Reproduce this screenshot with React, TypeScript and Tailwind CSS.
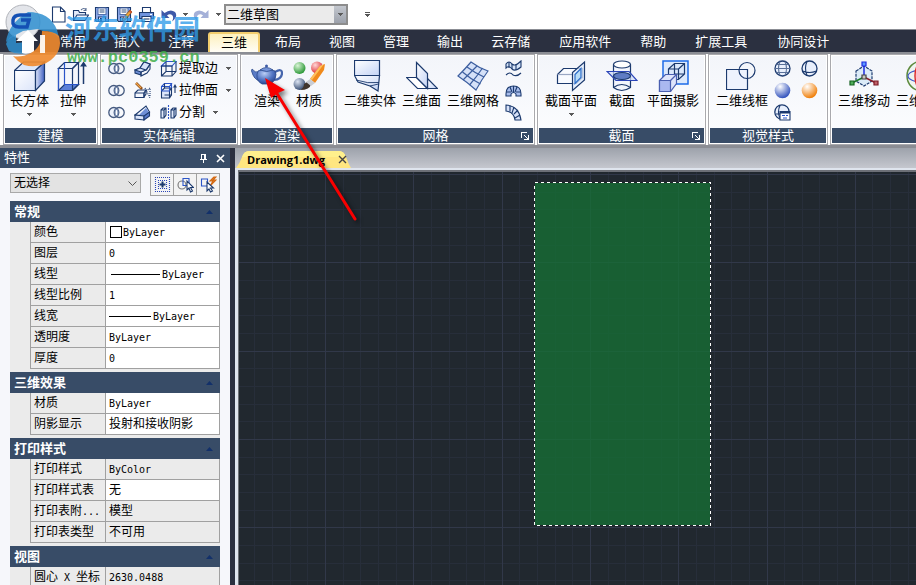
import React from 'react';

const NAVY = '#1c3a6e';

const tabs = ['常用', '插入', '注释', '三维', '布局', '视图', '管理', '输出', '云存储', '应用软件', '帮助', '扩展工具', '协同设计'];

type Row = { label: string; value: string; kind?: 'swatch' | 'line' | 'thick'; readOnly?: boolean };

const sections: { title: string; rows: Row[] }[] = [
  {
    title: '常规',
    rows: [
      { label: '颜色', value: 'ByLayer', kind: 'swatch' },
      { label: '图层', value: '0' },
      { label: '线型', value: 'ByLayer', kind: 'line' },
      { label: '线型比例', value: '1' },
      { label: '线宽', value: 'ByLayer', kind: 'thick' },
      { label: '透明度', value: 'ByLayer' },
      { label: '厚度', value: '0' },
    ],
  },
  {
    title: '三维效果',
    rows: [
      { label: '材质', value: 'ByLayer' },
      { label: '阴影显示', value: '投射和接收阴影' },
    ],
  },
  {
    title: '打印样式',
    rows: [
      { label: '打印样式', value: 'ByColor', readOnly: true },
      { label: '打印样式表', value: '无' },
      { label: '打印表附...', value: '模型', readOnly: true },
      { label: '打印表类型', value: '不可用', readOnly: true },
    ],
  },
  {
    title: '视图',
    rows: [{ label: '圆心 X 坐标', value: '2630.0488', readOnly: true }],
  },
];

const Caret = () => (
  <svg className="block h-[3px] w-[5px] shrink-0" viewBox="0 0 5 3" shapeRendering="crispEdges">
    <path d="M0 0h5v1H4v1H3v1H2V2H1V1H0z" fill="#5a5a5a" />
  </svg>
);

const Icon = ({ size = 'small', children }: { size?: 'small' | 'big'; children: React.ReactNode }) =>
  size === 'big' ? (
    <svg className="block h-8 w-8 shrink-0" viewBox="0 0 32 32" fill="none" stroke={NAVY} strokeWidth="1.2">
      {children}
    </svg>
  ) : (
    <svg className="block h-[17px] w-[17px] shrink-0" viewBox="0 0 17 17" fill="none" stroke={NAVY} strokeWidth="1.1">
      {children}
    </svg>
  );

/* ---- quick access icons ---- */

const NewIcon = () => (
  <Icon>
    <path d="M2.500 1h8L15 5.500V16H2.500z" fill="#fff" />
    <path d="M10.500 1v4.500H15" />
  </Icon>
);

const OpenIcon = () => (
  <Icon>
    <path d="M1.500 14V4.500h5l1 2h6V9" fill="#e3ebf9" />
    <path d="M1.500 14.500L5 9h11.500l-3.500 5.500z" fill="#eef3fc" />
    <path d="M9 4q3-3 5 0m0-2v2.500h-2.500" stroke="#5b6f94" />
  </Icon>
);

const SaveIcon = ({ pencil = false }: { pencil?: boolean }) => (
  <Icon>
    <path d="M1.500 1.500h13v14h-12l-1-1z" fill="#8fabea" />
    <path d="M4 2h8v6.500H4z" fill="#fff" stroke="#5271ad" />
    <path d="M5.500 4h5M5.500 6h5" stroke="#31507f" />
    <path d="M4.500 11h7v4.500h-7z" fill="#eef2fb" />
    <path d="M6 12h2v3H6z" fill={NAVY} stroke="none" />
    {pencil && (
      <>
        <path d="M14 4l2 2-7 8-3 1 1-3z" fill="#f0a63c" stroke="#7a4b1c" strokeWidth="0.8" />
        <path d="M14 4l2 2-1.200 1.400-2-2z" fill="#d8552d" stroke="none" />
      </>
    )}
  </Icon>
);

const PrintIcon = () => (
  <Icon>
    <path d="M4.500 1.500h8V7h-8z" fill="#fff" />
    <path d="M1.500 6.500h14v6h-14z" fill="#6f93dd" />
    <path d="M4 10.500h9v5H4z" fill="#fff" />
    <path d="M5.500 13h6" />
    <path d="M12 8.500h2" stroke="#fff" />
  </Icon>
);

const UndoIcon = () => (
  <Icon>
    <path d="M1.500 4v8h8L7 9.500Q10 7 12.500 9.500 14 12 12 15.500 18.500 10.500 15 6 10.500 2.500 4.500 7z" fill="#3e59a8" stroke="none" />
  </Icon>
);

const RedoIcon = () => (
  <Icon>
    <path d="M15.500 4v8h-8L10 9.500Q7 7 4.500 9.500 3 12 5 15.500-1.500 10.500 2 6 6.500 2.500 12.500 7z" fill="#a4b0d8" stroke="none" />
  </Icon>
);

/* ---- ribbon icons ---- */

const BoxIcon = () => (
  <Icon size="big">
    <defs>
      <linearGradient id="boxSide" x1="0" x2="1">
        <stop offset="0" stopColor="#dfe7fb" />
        <stop offset="1" stopColor="#3f5fc0" />
      </linearGradient>
      <linearGradient id="boxFront" x1="0" y1="0" x2="1" y2="1">
        <stop offset="0" stopColor="#fff" />
        <stop offset="1" stopColor="#dbe4fa" />
      </linearGradient>
    </defs>
    <path d="M.500 10.500h21v20H.500z" fill="url(#boxFront)" />
    <path d="M.500 10.500l9-8.500h21l-9 8.500z" fill="#dce7fb" />
    <path d="M21.500 10.500l9-8.500v19l-9 9.500z" fill="url(#boxSide)" />
  </Icon>
);

const ExtrudeIcon = () => (
  <Icon size="big">
    <path d="M1.500 8.500l6-6h14l-6 6z" fill="#edf2fd" />
    <path d="M1.500 30.500l6-6h14l-6 6z" fill="#5c80d8" />
    <path d="M1.500 8.500h14v22h-14zM15.500 8.500l6-6v22l-6 6" />
    <path d="M7.500 2.500v22h14M1.500 8.500v22" stroke="#2b55c8" />
    <path d="M26.500 24V5" strokeWidth="1.500" />
    <path d="M26.500 1.500l3.500 5h-7z" fill={NAVY} stroke="none" />
  </Icon>
);

const UnionIcon = () => (
  <Icon>
    <circle cx="5.800" cy="8.500" r="5" fill="#edf2fc" stroke="#44597f" strokeWidth="1.300" />
    <circle cx="11.200" cy="8.500" r="5" stroke="#44597f" strokeWidth="1.300" />
    <ellipse cx="8.500" cy="8.500" rx="1.500" ry="3.300" fill="#fff" stroke="#7287ae" />
  </Icon>
);

const ThickenIcon = () => (
  <Icon>
    <path d="M1 10l5-2 4-6 6 2-3 5-6 3v3l-6-2z" fill="#6f8fd6" />
    <path d="M6 8l4-6 6 2-4 6zM1 10l5-2 6 2-5 2z" fill="#d8e3f9" />
    <path d="M7 12v4l6-3 3-4V4" />
  </Icon>
);

const SliceIcon = () => (
  <Icon>
    <path d="M1 11l3-3h8l-2 3v4.500H1z" fill="#f4f7fe" />
    <path d="M1 11h9v4.500M12 8v4l-2 3" />
    <path d="M11 6l5 10M16 6l-6 5m6-4v8" strokeDasharray="1 1" />
    <path d="M2 1l6 6" stroke="#8a4a16" strokeWidth="2.600" />
    <path d="M2 1l5 5" stroke="#f3a649" strokeWidth="1.200" />
  </Icon>
);

const WedgeIcon = () => (
  <Icon>
    <path d="M1 11L12 2l3.500 6-5.500 4z" fill="#f1f5fd" />
    <path d="M5 11l7-7 3 4.500-5 3.500z" fill="#6f8fd6" stroke="none" />
    <path d="M1 11l9 1v4l-9-1z" fill="#dbe5fa" />
    <path d="M10 12l5.500-4v4L10 16z" fill="#5778ca" />
  </Icon>
);

const ExtractIcon = () => (
  <Icon>
    <path d="M1.500 6L6 1.500h10L12 6z" fill="#edf2fd" stroke="#2b55c8" />
    <path d="M1.500 6H12v10H1.500zM12 16l4-4.500v-10M6 1.500v10M1.500 16L6 11.500h10" />
  </Icon>
);

const PullFaceIcon = () => (
  <Icon>
    <path d="M1.500 9l3-3h7l-2 3v7h-8z" fill="#dce5f9" />
    <path d="M1.500 9V4.500l3-3h7l-2 3h-8M9.500 4.500V9h-8M11.500 1.500V6" stroke="#2b55c8" />
    <path d="M9.500 16l2-3V6M4.500 6V1.500M4.500 13h7" />
    <path d="M15 11V5" />
    <path d="M15 2l2 3.500h-4z" fill={NAVY} stroke="none" />
  </Icon>
);

const SeparateIcon = () => (
  <Icon>
    <path d="M1 6l2-2h3v7l-2 3H1zM1 6h3v8M4 6l2-2M11 6l2-2h3v7l-2 3h-3zM11 6h3v8M14 6l2-2" fill="#e3ebfb" />
    <path d="M8.500 1v15" stroke="#2b55c8" strokeDasharray="2 1" />
  </Icon>
);

const TeapotIcon = () => (
  <Icon size="big">
    <defs>
      <radialGradient id="pot" cx="0.400" cy="0.300" r="0.700">
        <stop offset="0" stopColor="#b9cdf5" />
        <stop offset="0.600" stopColor="#5577c4" />
        <stop offset="1" stopColor="#2c4a96" />
      </radialGradient>
    </defs>
    <path d="M24 12q7-4 7 1 0 6-8 7" stroke="#4766ad" strokeWidth="2.200" />
    <path d="M8 12Q4 13 1 9l-.500 2Q3 20 9 21" fill="#5a7bc6" stroke="#2c4a8c" strokeWidth="0.800" />
    <path d="M7 11q8-4 17 0 2 3 0 8-2 4-5 5h-8q-4-2-5-6-.500-4 1-7z" fill="url(#pot)" stroke="#2c4a8c" strokeWidth="0.800" />
    <path d="M9 10q6-5 13 0-6 3-13 0z" fill="#7594d8" stroke="#2c4a8c" strokeWidth="0.800" />
    <circle cx="15.500" cy="6" r="1.500" fill="#3f5ca6" stroke="none" />
  </Icon>
);

const MaterialIcon = () => (
  <Icon size="big">
    <defs>
      <radialGradient id="gGreen" cx="0.350" cy="0.300" r="0.700"><stop offset="0" stopColor="#d9f4d6" /><stop offset="1" stopColor="#2f9a3a" /></radialGradient>
      <radialGradient id="gRed" cx="0.350" cy="0.300" r="0.700"><stop offset="0" stopColor="#ffd6d6" /><stop offset="1" stopColor="#dc2f38" /></radialGradient>
      <radialGradient id="gSteel" cx="0.350" cy="0.300" r="0.700"><stop offset="0" stopColor="#dce4f2" /><stop offset="1" stopColor="#3c5277" /></radialGradient>
    </defs>
    <g stroke="none">
      <circle cx="6.500" cy="8" r="6" fill="url(#gGreen)" />
      <circle cx="24" cy="7.500" r="6" fill="url(#gRed)" />
      <circle cx="6.500" cy="24" r="6" fill="url(#gSteel)" />
      <path d="M32 4l-1 6-9 13-5-4L27 6z" fill="#f08a1c" />
      <path d="M31 4L19 20l-2-1L27 6z" fill="#fdbf5e" />
      <path d="M18 24q-1 6-11 6 4-2 4-6l3-2z" fill="#40352d" />
      <path d="M17 19l5 4-4 3-5-4z" fill="#c9cdd4" />
    </g>
  </Icon>
);

const Solid2dIcon = () => (
  <Icon size="big">
    <defs>
      <linearGradient id="solid" x1="0" y1="0" x2="1" y2="1">
        <stop offset="0" stopColor="#fff" />
        <stop offset="1" stopColor="#c3d3f6" />
      </linearGradient>
    </defs>
    <path d="M.500.500h25v15H.500z" fill="url(#solid)" />
    <path d="M.500 15.500h25L24 31l-8-5-12-4z" fill="url(#solid)" />
    <path d="M2 20q12 4 23 2.500M16 26l8.500-2" strokeWidth="0.900" />
  </Icon>
);

const Face3dIcon = () => (
  <Icon size="big">
    <path d="M.500 17.500h10l11 11H11.500z" fill="#fff" />
    <path d="M21.500 18.500l10 10h-10z" fill="url(#solid)" />
    <path d="M10.500 2.500l11 11v15l-11-11z" fill="url(#solid)" />
  </Icon>
);

const MeshIcon = () => (
  <Icon size="big">
    <path d="M1 16Q8 9 14 2q8 6 17 9-6 8-12 19Q10 22 1 16z" fill="#d5e1f8" stroke="#3c5e9f" />
    <path d="M5.500 12q8 7 18 12M10 7q8 6 17 10M6 20q7-7 14-14M12.500 25q7-8 13-17" stroke="#3c5e9f" />
  </Icon>
);

const RuledIcon = () => (
  <Icon>
    <path d="M1 4q3-4 6 0 3 3 9-3v6q-6 5-9 2-3-4-6-1z" fill="#d6e4f8" />
    <path d="M4 2v6M7 4v5M11 4v6M1 15q4-4 7 0 4 2 8-2" />
  </Icon>
);

const RevolveIcon = () => (
  <Icon>
    <path d="M1 12Q1 4 8.500 4T16 12v2h-5v-2q-2.500-3-5 0v2H1z" fill="#a8bdec" />
    <path d="M1 10h5M11 10h5M5 5l2 5M12 5l-2 5M8.500 4v6" />
  </Icon>
);

const EdgeMeshIcon = () => (
  <Icon>
    <path d="M1 1Q14 2 16 16h-6Q9 8 1 7z" fill="#d6e1f8" />
    <path d="M5 1.500v6M9 3L7 9M13 6l-4 4M15 11l-5 3" />
  </Icon>
);

const SectionPlaneIcon = () => (
  <Icon size="big">
    <path d="M2.500 14.500l6-6h19v9l-6 6h-19z" fill="#f8faff" />
    <path d="M2.500 14.500h16" stroke="#9aa7c4" />
    <path d="M17.500 12.500l12-10.500v18l-12 10.500z" fill="#e4edfd" fillOpacity="0.800" />
    <path d="M20 14.500l6-6v9l-6 6z" fill="#b8dcf7" stroke="#2b6cc8" />
  </Icon>
);

const SectionIcon = () => (
  <Icon size="big">
    <path d="M7.500 4.500v23q8 6 17 0v-23" fill="#f3f6fd" />
    <ellipse cx="16" cy="4.500" rx="8.500" ry="3.500" fill="#fff" />
    <path d="M1 11.500h22l8 9H10z" fill="#cfdcf8" fillOpacity="0.700" stroke="#2b45b8" />
    <ellipse cx="16" cy="16" rx="8.500" ry="3.500" fill="#5f7cc4" />
    <path d="M7.500 27.500q8-6 17 0" />
  </Icon>
);

const FlatshotIcon = () => (
  <Icon size="big">
    <path d="M6 1h25v23H6z" fill="#dce9fc" stroke="#1d6be8" strokeWidth="1.500" />
    <path d="M11.500 9l6-5.500h10V14l-6 5.500h-10zM11.500 9h10v10.500M21.500 9l6-5.500M17.500 3.500V14h10M11.500 19.500l6-5.500" />
    <path d="M2.500 20.500l6-6h11v9l-6 8h-11z" fill="#dfe5fb" stroke="#4a5fb0" />
    <path d="M2.500 20.500h11v11h-11z" fill="#aab8f0" stroke="#4a5fb0" />
    <path d="M13.500 20.500l6-6" stroke="#4a5fb0" />
  </Icon>
);

const WireframeIcon = () => (
  <Icon size="big">
    <path d="M.500 9.500h21v20H.500z" fill="#eef2fd" />
    <circle cx="21" cy="10.500" r="8" />
  </Icon>
);

const GlobeIcon = ({ hidden = false }: { hidden?: boolean }) => (
  <Icon>
    <circle cx="8.500" cy="8.500" r="7.500" fill="#e8effc" strokeWidth="1.300" />
    {hidden ? (
      <path d="M6 1.500Q3 8 6 15.500M1.500 11q7 3 14 0" />
    ) : (
      <path d="M6 1.500Q3 8 6 15.500M11 1.500q3 7 0 14M1 8.500h15M2.500 4.500h12M2.500 12.500h12" stroke="#5a7199" />
    )}
  </Icon>
);

const Ball = ({ tone }: { tone: 'blue' | 'orange' }) => (
  <Icon>
    <defs>
      <radialGradient id={`ball-${tone}`} cx="0.350" cy="0.250" r="0.750">
        <stop offset="0" stopColor="#fff" />
        <stop offset="1" stopColor={tone === 'blue' ? '#3353bd' : '#f07f09'} />
      </radialGradient>
    </defs>
    <circle cx="8.500" cy="8.500" r="7.800" fill={`url(#ball-${tone})`} stroke="none" />
  </Icon>
);

const StyleManagerIcon = () => (
  <Icon>
    <circle cx="8" cy="8" r="7.200" fill="#e8effc" strokeWidth="1.300" />
    <path d="M6 1.500q-3 6 0 13M2 10h5" />
    <path d="M6 7.500h10v8.500H6z" fill="#fff" />
    <path d="M6 8.500h10" strokeWidth="2" />
    <path d="M8 11.500h3m1 0h2m-5 2.500h4" stroke="#2b55c8" />
  </Icon>
);

const Move3dIcon = () => (
  <Icon size="big">
    <path d="M8 11l8-5 8 5v10l-8 5-8-5z" fill="#dcebf8" strokeDasharray="3 1" />
    <path d="M16 16V5" stroke="#1d2be0" strokeWidth="1.500" />
    <path d="M16 17L4 23" stroke="#1d7a2a" strokeWidth="1.500" />
    <path d="M16 17l12 6" stroke="#8a1f2a" strokeWidth="1.500" />
    <path d="M14 2h4v4h-4z" fill="#5f9bff" stroke="#1d2be0" />
    <path d="M2 21h4v4H2z" fill="#4fae57" stroke="#176322" />
    <path d="M26 21h4v4h-4z" fill="#c06068" stroke="#7c1c26" />
    <path d="M14 15h4v4h-4z" fill="#c9c9c0" stroke="#444" />
  </Icon>
);

const Rotate3dIcon = () => (
  <Icon size="big">
    <circle cx="16" cy="16" r="15" fill="#eef5f0" stroke="#5c8a3c" strokeWidth="1.500" />
    <ellipse cx="16" cy="16" rx="14" ry="6" stroke="#3f57c8" />
    <ellipse cx="16" cy="16" rx="7" ry="14" stroke="#e02a2a" strokeWidth="1.500" />
  </Icon>
);

const BigButton = ({ icon, label, menu = false }: { icon: React.ReactNode; label: string; menu?: boolean }) => (
  <button className="flex min-w-8 shrink-0 flex-col items-center whitespace-nowrap pt-1">
    {icon}
    <span className="leading-[18px]">{label}</span>
    {menu && (
      <span className="pt-[3px]">
        <Caret />
      </span>
    )}
  </button>
);

const SmallButton = ({ icon, label, title }: { icon: React.ReactNode; label?: string; title: string }) => (
  <button aria-label={title} className="flex h-[22px] items-center gap-[2px] whitespace-nowrap">
    {icon}
    {label && (
      <>
        <span>{label}</span>
        <span className="pl-[6px]">
          <Caret />
        </span>
      </>
    )}
  </button>
);

const Panel = ({ title, launcher, className, children }: { title: string; launcher?: boolean; className: string; children: React.ReactNode }) => (
  <section className={`flex h-[91px] shrink-0 flex-col overflow-hidden border border-[#a9a9ad] bg-white p-px ${className}`}>
    <div className="flex min-h-0 flex-1 items-start bg-gradient-to-b from-[#f3f5fa] to-[#fbfcfe]">{children}</div>
    <h2 className="flex h-[15px] items-center bg-[#384c67] text-white">
      <span className="flex-1 text-center">{title}</span>
      {launcher && (
        <button aria-label={`${title}设置`} className="-ml-3 mr-1">
          <svg className="block h-2 w-2" viewBox="0 0 8 8" fill="none" stroke="#fff" shapeRendering="crispEdges">
            <path d="M.500 6V.500H6M3 3l4 4M7.500 3v4.500H3" />
          </svg>
        </button>
      )}
    </h2>
  </section>
);

/* Latin runs are set in half-width characters next to the 12px Chinese text */
const Mixed = ({ text }: { text: string }) => (
  <>
    {text.split(/([ -~]+)/).map((part, i) =>
      i % 2 ? (
        <span key={i} className="whitespace-pre font-['DejaVu_Sans_Mono',monospace] text-[10px]">
          {part}
        </span>
      ) : (
        part
      ),
    )}
  </>
);

const Value = ({ row }: { row: Row }) => (
  <span className="flex items-center whitespace-nowrap">
    {row.kind === 'swatch' && <span className="ml-px mr-px h-3 w-3 border border-black bg-white" />}
    {row.kind === 'line' && <span className="ml-[2px] mr-[2px] h-px w-[49px] bg-black" />}
    {row.kind === 'thick' && <span className="mr-[2px] h-px w-[42px] bg-black" />}
    <span>
      <Mixed text={row.value} />
    </span>
  </span>
);

const Section = ({ title, rows }: { title: string; rows: Row[] }) => (
  <table className="mb-[3px] w-full table-fixed border-separate border-spacing-0">
    <colgroup>
      <col className="w-5" />
      <col className="w-[75px]" />
      <col />
    </colgroup>
    <thead>
      <tr className="h-[21px] bg-[#384c67] text-white">
        <th colSpan={3} className="p-0 text-left text-[13px] leading-5">
          <button className="flex w-full items-center justify-between pl-1 pr-[7px]">
            {title}
            <svg className="h-1 w-[7px]" viewBox="0 0 7 4">
              <path d="M3.500 0L7 4H0z" fill="#12306a" />
            </svg>
          </button>
        </th>
      </tr>
    </thead>
    <tbody>
      {rows.map((row) => (
        <tr key={row.label} className="h-[21px]">
          <td className="p-0" />
          <th scope="row" className="whitespace-nowrap border-b border-l border-[#a0a0a0] p-0 pl-[3px] text-left font-normal leading-4">
            <Mixed text={row.label} />
          </th>
          <td className={`border-b border-l border-r border-[#a0a0a0] p-0 pl-[3px] leading-4 ${row.readOnly ? 'bg-[#ebebeb]' : 'bg-white'}`}>
            <Value row={row} />
          </td>
        </tr>
      ))}
    </tbody>
  </table>
);

const Properties = () => (
  <aside className="flex w-[235px] shrink-0 flex-col border-r-[5px] border-[#2b3040] bg-[#f6f7fb] text-[12px]">
    <header className="flex h-5 shrink-0 items-center bg-[#384c67] pl-1 pr-[5px] text-[13px] text-white">
      <h2 className="flex-1">特性</h2>
      <button aria-label="固定" className="mr-2">
        <svg className="block h-[9px] w-[9px]" viewBox="0 0 9 9" fill="none" stroke="#fff" shapeRendering="crispEdges">
          <path d="M2.500 5V.500h4V5M5.500 1v4M1 5.500h7M4.500 6v3" />
        </svg>
      </button>
      <button aria-label="关闭">
        <svg className="block h-[9px] w-[9px]" viewBox="0 0 9 9" stroke="#fff" strokeWidth="1.600">
          <path d="M1 1l7 7M8 1L1 8" />
        </svg>
      </button>
    </header>
    <div className="flex items-start justify-between pb-[5px] pl-[10px] pr-[10px] pt-[5px]">
      <div className="relative">
        <select aria-label="选择对象" className="h-5 w-[131px] appearance-none border border-[#a9a9a9] bg-[#e3e3e3] pl-[3px] text-[12px] leading-4">
          <option>无选择</option>
        </select>
        <svg className="pointer-events-none absolute right-1 top-2 h-[6px] w-[9px]" viewBox="0 0 9 6" fill="none" stroke="#555">
          <path d="M.500 .500l4 4 4-4" />
        </svg>
      </div>
      <div className="flex border-l border-[#a0a0a0]">
        {[
          <g key="pick">
            <path d="M1 1.500h15M1 15.500h15M1.500 1v15M15.500 1v15M4 4.500h9M4 12.500h9M4.500 4v9M12.500 4v9" stroke="#2b45b8" strokeDasharray="1 1" />
            <path d="M8.500 5.500v6M5.500 8.500h6" strokeWidth="2" />
          </g>,
          <g key="select">
            <circle cx="5" cy="9" r="4" stroke="#777" />
            <path d="M6 2.500h6v7H6z" stroke="#2b55c8" />
            <path d="M10 5v9l2-2 1.500 4 2-1-2-3.500h3z" fill="#fff" />
          </g>,
          <g key="quick">
            <path d="M1.500 3h6v7h-6z" stroke="#2b55c8" />
            <path d="M14 1l-4 4h3l-3 5 6-6h-3l3-3z" fill="#f5a13c" stroke="#d26814" />
            <path d="M7 6v9l2-2 1.500 3 2-1-2-3h3z" fill="#fff" />
          </g>,
        ].map((g) => (
          <button key={g.key} aria-label={String(g.key)} className="flex h-[23px] w-[23px] items-center justify-center border-y border-r border-[#a0a0a0] bg-[#f3f3f3]">
            <Icon>{g}</Icon>
          </button>
        ))}
      </div>
    </div>
    <div className="mx-[10px] min-h-0 flex-1 overflow-hidden bg-[#ebebeb]">
      {sections.map((s) => (
        <Section key={s.title} {...s} />
      ))}
    </div>
  </aside>
);

const STEP = 17.66;
const gridLines = Array.from({ length: 160 }, (_, i) => i - 4);

const Canvas = () => (
  <svg className="block h-full w-full" shapeRendering="crispEdges">
    {gridLines.filter((i) => i % 5 !== 0).map((i) => (
      <React.Fragment key={i}>
        <rect x={Math.round(86 + i * STEP)} y="0" width="1" height="100%" fill="#272e3a" />
        <rect x="0" y={Math.round(2 + i * STEP)} width="100%" height="1" fill="#272e3a" />
      </React.Fragment>
    ))}
    {gridLines.filter((i) => i % 5 === 0).map((i) => (
      <React.Fragment key={i}>
        <rect x={Math.round(86 + i * STEP)} y="0" width="1" height="100%" fill="#313849" />
        <rect x="0" y={Math.round(2 + i * STEP)} width="100%" height="1" fill="#313849" />
      </React.Fragment>
    ))}
    <rect x="295" y="10" width="177" height="344" fill="#157136" fillOpacity="0.750" />
    <rect x="295.500" y="10.500" width="176" height="343" fill="none" stroke="#20252d" />
    <rect x="295.500" y="10.500" width="176" height="343" fill="none" stroke="#fff" strokeDasharray="3 3" />
  </svg>
);

const Drawing = () => (
  <main className="flex min-w-0 flex-1 flex-col bg-gradient-to-b from-[#9da2ab] to-[#c9cbd2] bg-[length:100%_22px] bg-no-repeat">
    <div className="flex h-5 shrink-0 items-end">
      <div className="relative ml-px flex h-[17px] w-[115px] items-center pl-[11px] pr-1">
        <svg className="absolute inset-0 h-full w-full" viewBox="0 0 115 17" preserveAspectRatio="none">
          <path d="M0 17Q4 12 6 6 8 0 13 0h90q5 0 7 6t5 11z" fill="#ffe680" />
          <path d="M6 6Q8 0 13 0h90q5 0 7 6z" fill="#fff08c" />
        </svg>
        <button className="relative flex-1 text-left font-['Open_Sans','Liberation_Sans',sans-serif] text-[11px] font-bold leading-4">Drawing1.dwg</button>
        <button aria-label="关闭图纸" className="relative">
          <svg className="block h-[9px] w-[9px]" viewBox="0 0 9 9" stroke="#444" strokeWidth="1.400">
            <path d="M1 1l7 7M8 1L1 8" />
          </svg>
        </button>
      </div>
    </div>
    <div className="flex min-h-0 flex-1 flex-col border-l-[3px] border-t-2 border-[#dfe5ee]">
      <div className="min-h-0 flex-1 border-l border-t-2 border-[#6d7077] bg-[#21282f]">
        <Canvas />
      </div>
    </div>
  </main>
);

const TitleBar = () => (
  <div className="flex h-[29px] shrink-0 items-center bg-white pl-[50px]">
    <div className="flex items-center gap-[5px]">
      <button aria-label="新建"><NewIcon /></button>
      <button aria-label="打开"><OpenIcon /></button>
      <button aria-label="保存"><SaveIcon /></button>
      <button aria-label="另存为"><SaveIcon pencil /></button>
      <button aria-label="打印"><PrintIcon /></button>
      <button aria-label="放弃" className="flex items-center gap-[6px]"><UndoIcon /><Caret /></button>
      <button aria-label="重做" className="flex items-center gap-[6px]"><RedoIcon /><Caret /></button>
    </div>
    <div className="relative ml-[3px]">
      <select aria-label="工作空间" className="h-[21px] w-[124px] appearance-none border-2 border-[#8d8d8d] bg-[#ebebeb] pl-px text-[13px] leading-4">
        <option>二维草图</option>
      </select>
      <span className="pointer-events-none absolute bottom-[2px] right-[2px] top-[2px] flex w-3 items-center justify-center bg-gradient-to-b from-[#c3c7ce] to-[#9ca1ab]">
        <Caret />
      </span>
    </div>
    <button aria-label="自定义" className="ml-[17px]">
      <svg className="block h-[6px] w-[5px]" viewBox="0 0 5 6" shapeRendering="crispEdges">
        <path d="M0 0h5v1H0zM0 2h5v1H4v1H3v1H2V4H1V3H0z" fill="#555" />
      </svg>
    </button>
  </div>
);

const tabClass = (tab: string) => {
  if (tab === '三维') {
    return 'mr-px h-5 shrink-0 rounded-t-[3px] border-x-2 border-t-2 border-[#f2cd6e] bg-gradient-to-b from-[#fdf0bd] to-[#fffdf6] px-[11px] leading-4';
  }
  return tab.length > 3 ? 'h-5 shrink-0 px-[15px] text-white' : 'h-5 shrink-0 px-[14px] text-white';
};

const Ribbon = () => (
  <div className="flex shrink-0 gap-[2px] overflow-hidden border-b-[3px] border-t-2 border-[#8b8d94] bg-white pl-[3px]">
    <Panel title="建模" className="w-[95px]">
      <div className="flex gap-[11px] pl-[5px]">
        <BigButton icon={<BoxIcon />} label="长方体" menu />
        <div className="-mx-[3px]">
          <BigButton icon={<ExtrudeIcon />} label="拉伸" menu />
        </div>
      </div>
    </Panel>
    <Panel title="实体编辑" className="w-[138px]">
      <div className="flex gap-[9px] pl-[6px] pt-px">
        <div>
          <SmallButton title="并集" icon={<UnionIcon />} />
          <SmallButton title="差集" icon={<UnionIcon />} />
          <SmallButton title="交集" icon={<UnionIcon />} />
        </div>
        <div>
          <SmallButton title="加厚" icon={<ThickenIcon />} />
          <SmallButton title="剖切" icon={<SliceIcon />} />
          <SmallButton title="干涉" icon={<WedgeIcon />} />
        </div>
        <div>
          <SmallButton title="提取边" label="提取边" icon={<ExtractIcon />} />
          <SmallButton title="拉伸面" label="拉伸面" icon={<PullFaceIcon />} />
          <SmallButton title="分割" label="分割" icon={<SeparateIcon />} />
        </div>
      </div>
    </Panel>
    <Panel title="渲染" className="w-[94px]">
      <div className="flex gap-[10px] pl-[9px]">
        <BigButton icon={<TeapotIcon />} label="渲染" />
        <BigButton icon={<MaterialIcon />} label="材质" />
      </div>
    </Panel>
    <Panel title="网格" launcher className="w-[199px]">
      <div className="flex gap-[6px] pl-[6px]">
        <BigButton icon={<Solid2dIcon />} label="二维实体" />
        <BigButton icon={<Face3dIcon />} label="三维面" />
        <BigButton icon={<MeshIcon />} label="三维网格" />
        <div className="pt-px">
          <SmallButton title="直纹网格" icon={<RuledIcon />} />
          <SmallButton title="旋转网格" icon={<RevolveIcon />} />
          <SmallButton title="边界网格" icon={<EdgeMeshIcon />} />
        </div>
      </div>
    </Panel>
    <Panel title="截面" launcher className="w-[169px]">
      <div className="flex gap-[9px] pl-[6px]">
        <BigButton icon={<SectionPlaneIcon />} label="截面平面" menu />
        <BigButton icon={<SectionIcon />} label="截面" />
        <BigButton icon={<FlatshotIcon />} label="平面摄影" />
      </div>
    </Panel>
    <Panel title="视觉样式" className="w-[120px]">
      <div className="flex pl-[6px]">
        <BigButton icon={<WireframeIcon />} label="二维线框" />
        <div className="grid grid-cols-2 gap-x-[10px] pl-[6px] pt-px">
          <SmallButton title="三维线框" icon={<GlobeIcon />} />
          <SmallButton title="消隐" icon={<GlobeIcon hidden />} />
          <SmallButton title="概念" icon={<Ball tone="blue" />} />
          <SmallButton title="真实" icon={<Ball tone="orange" />} />
          <SmallButton title="视觉样式管理器" icon={<StyleManagerIcon />} />
        </div>
      </div>
    </Panel>
    <Panel title="" className="w-[240px]">
      <div className="flex gap-[6px] pl-[6px]">
        <BigButton icon={<Move3dIcon />} label="三维移动" />
        <BigButton icon={<Rotate3dIcon />} label="三维旋转" />
      </div>
    </Panel>
  </div>
);

/* site mark over the top left corner, above the application button */
const SiteMark = () => (
  <div className="pointer-events-none absolute left-0 top-0">
    <svg className="block h-[70px] w-[70px]" viewBox="0 0 70 70">
      <circle cx="23" cy="22" r="17" fill="#e3e5ea" stroke="#b2b5bb" />
      <path d="M6 42Q8 24 28 12q22 0 29 18l2 8q-8-8-16-7l-5-2-15 2Q11 37 6 42z" fill="#2f8fd0" fillOpacity="0.850" />
      <path d="M31 15H20q-6 0-7 5-1 7 6 7h8l2-7h-8" fill="none" stroke="#1450b4" strokeWidth="3.500" />
      <path d="M6 44q2-8 10-9v8q8 0 11-3v13q-10 2-18-2z" fill="#2f8fd0" fillOpacity="0.850" />
      <path d="M16 41l12-11 10 11h-4v11q-8 3-12 1V41z" fill="#fff" />
      <path d="M42 31q12 0 17 5 4 14-8 24-12 9-27 5-7-4-11-9 8 2 18-3 11-6 11-22z" fill="#f08a2c" fillOpacity="0.900" />
      <path d="M40 35h5v18h-5z" fill="#fff" fillOpacity="0.900" />
    </svg>
    <span className="absolute left-[65px] top-[12px] whitespace-nowrap text-[27px] font-bold leading-9 text-[#2f9be8]/80">河东软件园</span>
    <span className="absolute left-[67px] top-[48px] whitespace-nowrap font-['Liberation_Mono',monospace] text-[17px] font-bold leading-5 text-[#3fae49]/85">
      www.pc0359.cn
    </span>
  </div>
);

const Pointer = () => (
  <svg className="pointer-events-none absolute left-[255px] top-[70px] h-[160px] w-[120px] drop-shadow-[3px_3px_2px_rgba(0,0,0,0.5)]" viewBox="0 0 120 160">
    <path d="M21 22L100 149" stroke="#f80000" strokeWidth="3" strokeLinecap="round" />
    <path d="M10 8l20 12-7 3-7 5z" fill="#f80000" />
  </svg>
);

export default function App() {
  return (
    <div className="relative flex h-screen flex-col overflow-hidden bg-[#2b3040] font-['Liberation_Sans','Noto_Sans_CJK_SC',sans-serif] text-[13px] leading-4 text-black">
      <TitleBar />
      <nav className="flex h-[23px] shrink-0 items-end overflow-hidden border-t border-[#8b8d94] bg-[#2b3040] pl-[46px]">
        {tabs.map((tab) => (
          <button key={tab} className={tabClass(tab)}>
            {tab}
          </button>
        ))}
      </nav>
      <Ribbon />
      <div className="flex min-h-0 flex-1">
        <Properties />
        <Drawing />
      </div>
      <SiteMark />
      <Pointer />
    </div>
  );
}
